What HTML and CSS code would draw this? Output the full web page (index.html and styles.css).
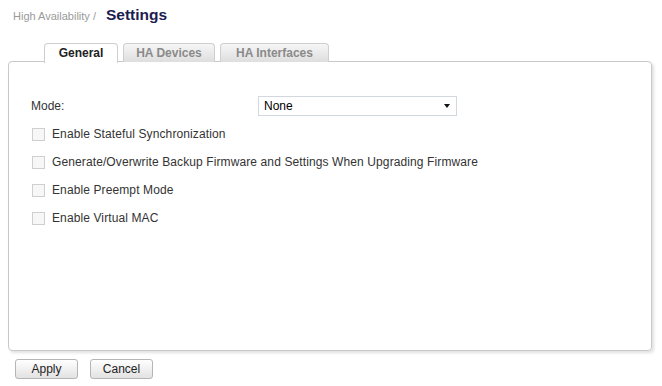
FILE: index.html
```html
<!DOCTYPE html>
<html lang="en">
<head>
    <meta charset="UTF-8">
    <title>High Availability Settings</title>
    <link rel="stylesheet" href="styles.css">
</head>
<body>
    <div class="page-header">
        <span class="crumb">High Availability /</span>
        <span class="page-title">Settings</span>
    </div>

    <div class="tabs">
        <div class="tab active">General</div>
        <div class="tab">HA Devices</div>
        <div class="tab">HA Interfaces</div>
    </div>

    <div class="panel">
        <div class="form-row">
            <label class="field-label">Mode:</label>
            <div class="select-box">
                <span>None</span>
                <span class="caret"></span>
            </div>
        </div>
        <div class="check-list">
            <div class="check-row"><span class="checkbox"></span>Enable Stateful Synchronization</div>
            <div class="check-row"><span class="checkbox"></span>Generate/Overwrite Backup Firmware and Settings When Upgrading Firmware</div>
            <div class="check-row"><span class="checkbox"></span>Enable Preempt Mode</div>
            <div class="check-row"><span class="checkbox"></span>Enable Virtual MAC</div>
        </div>
    </div>

    <div class="actions">
        <button class="btn">Apply</button>
        <button class="btn">Cancel</button>
    </div>
</body>
</html>
```

FILE: styles.css
```css
body {
    margin: 0;
    background: #ffffff;
    font-family: 'Liberation Sans', Arial, sans-serif;
    font-size: 12px;
    color: #333;
}
.page-header {
    padding: 6px 0 0 13px;
    height: 22px;
    display: flex;
    align-items: baseline;
}
.crumb {
    font-size: 11px;
    color: #9a9a9a;
    margin-right: 10px;
}
.page-title {
    font-size: 15.5px;
    font-weight: bold;
    color: #1c1c50;
}
.tabs {
    display: flex;
    gap: 5px;
    margin: 15px 0 0 44px;
    position: relative;
    z-index: 2;
}
.tab {
    box-sizing: border-box;
    height: 19px;
    line-height: 19px;
    border: 1px solid #cfcfcf;
    border-bottom: none;
    border-radius: 4px 4px 0 0;
    background: linear-gradient(#f6f6f6, #dedede);
    color: #8a8a8a;
    font-weight: bold;
    font-size: 12px;
    text-align: center;
    white-space: nowrap;
}
.tab:nth-child(1) { width: 74px; }
.tab:nth-child(2) { width: 92px; }
.tab:nth-child(3) { width: 109px; }
.tab.active {
    background: #fff;
    color: #222;
    height: 20px;
    margin-bottom: -1px;
}
.panel {
    margin: -1px 8px 0 8px;
    width: 644px;
    height: 290px;
    border: 1px solid #c9c9c9;
    border-radius: 4px;
    box-shadow: 2px 2px 3px rgba(0, 0, 0, 0.12);
    box-sizing: border-box;
    padding: 34px 0 0 22px;
    position: relative;
    z-index: 1;
}
.form-row {
    display: flex;
    align-items: center;
    height: 20px;
}
.field-label {
    width: 227px;
}
.select-box {
    width: 199px;
    height: 20px;
    box-sizing: border-box;
    border: 1px solid #d3d8de;
    padding: 0 6px 0 5px;
    display: flex;
    align-items: center;
    justify-content: space-between;
    color: #000;
}
.caret {
    width: 0;
    height: 0;
    border-left: 3.5px solid transparent;
    border-right: 3.5px solid transparent;
    border-top: 4px solid #111;
}
.check-list {
    margin-top: 4px;
}
.check-row {
    display: flex;
    align-items: center;
    height: 28px;
    padding-left: 1px;
    letter-spacing: 0.11px;
}
.checkbox {
    width: 11px;
    height: 11px;
    border: 1px solid #cfcfcf;
    background: #f7f7f7;
    margin-right: 7px;
}
.actions {
    display: flex;
    gap: 12px;
    margin: 8px 0 0 15px;
}
.btn {
    width: 63px;
    height: 20px;
    border: 1px solid #b5b5b5;
    border-radius: 3px;
    background: linear-gradient(#ffffff, #e2e2e2);
    font-family: 'Liberation Sans', Arial, sans-serif;
    font-size: 12px;
    color: #222;
    padding: 0;
}
```
